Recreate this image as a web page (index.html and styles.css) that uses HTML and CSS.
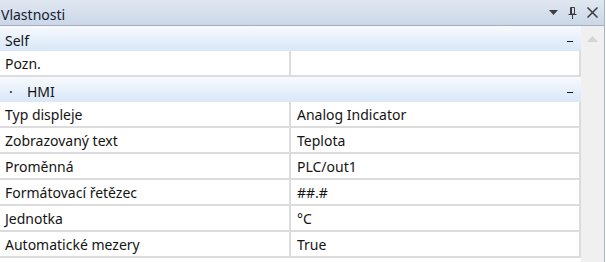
FILE: index.html
```html
<!DOCTYPE html>
<html lang="cs">
<head>
    <meta charset="UTF-8">
    <title>Vlastnosti</title>
    <link rel="stylesheet" href="styles.css">
</head>
<body>
    <div class="panel">
        <div class="titlebar">
            <span class="title">Vlastnosti</span>
            <div class="tools">
                <svg width="9" height="5" viewBox="0 0 9 5"><path d="M0 0H9L4.5 5Z" fill="#3c3c3c"/></svg>
                <svg width="9" height="12" viewBox="0 0 9 12"><path d="M2.5 0.5H6.5V7H2.5Z M3.5 0.5V7 M0.5 7.5H8.5 M4.5 7.5V12" fill="none" stroke="#3c3c3c" stroke-width="1"/></svg>
                <svg width="11" height="11" viewBox="0 0 11 11"><path d="M0.5 0.5L10.5 10.5M10.5 0.5L0.5 10.5" stroke="#3c3c3c" stroke-width="1.5"/></svg>
            </div>
        </div>
        <div class="content">
            <div class="grid">
                <div class="category"><span class="label">Self</span><i class="collapse"></i></div>
                <div class="row"><div class="name">Pozn.</div><div class="value"></div></div>
                <div class="category"><span class="label"><b class="dot">·</b>HMI</span><i class="collapse"></i></div>
                <div class="row"><div class="name">Typ displeje</div><div class="value">Analog Indicator</div></div>
                <div class="row"><div class="name">Zobrazovaný text</div><div class="value">Teplota</div></div>
                <div class="row"><div class="name">Proměnná</div><div class="value">PLC/out1</div></div>
                <div class="row"><div class="name">Formátovací řetězec</div><div class="value">##.#</div></div>
                <div class="row"><div class="name">Jednotka</div><div class="value">°C</div></div>
                <div class="row"><div class="name">Automatické mezery</div><div class="value">True</div></div>
            </div>
            <div class="scrollbar">
                <svg width="11" height="6" viewBox="0 0 11 6"><path d="M0 6H11L5.5 0Z" fill="#d4d4d4"/></svg>
            </div>
        </div>
    </div>
</body>
</html>
```

FILE: styles.css
```css
body {
    margin: 0;
    background: #ffffff;
    font-family: "Noto Sans", "Open Sans", sans-serif;
    font-size: 14px;
    color: #141414;
}

.panel {
    width: 604px;
    height: 262px;
    border-right: 1px solid #a9b5c6;
    display: flex;
    flex-direction: column;
}

.titlebar {
    height: 25px;
    border-bottom: 1px solid #a3adbd;
    background: linear-gradient(#e0e7f1, #cbd7e7);
    display: flex;
    align-items: center;
    justify-content: space-between;
    padding: 0 6px 0 1px;
}

.title {
    color: #15202e;
    padding-top: 3px;
}

.tools {
    display: flex;
    align-items: center;
    gap: 10px;
}

.content {
    flex: 1;
    display: flex;
    background: #f0f0f0;
}

.grid {
    width: 581px;
    background: #fff;
    display: flex;
    flex-direction: column;
}

.category {
    height: 25px;
    background: linear-gradient(#f7fafe, #d9e7f8);
    display: flex;
    align-items: center;
    justify-content: space-between;
    padding: 0 8px 0 5px;
}

.label {
    padding-top: 3px;
}

.dot {
    font-weight: normal;
    display: inline-block;
    width: 18px;
    padding-left: 4px;
}

.collapse {
    width: 6px;
    height: 1px;
    background: #1a1a1a;
    margin-top: 5px;
}

.row {
    height: 24px;
    display: flex;
    border-bottom: 2px solid #dcdcdc;
    border-right: 2px solid #dcdcdc;
}

.name {
    width: 284px;
    padding: 2px 0 0 5px;
    border-right: 2px solid #dcdcdc;
    line-height: 22px;
}

.value {
    flex: 1;
    padding: 2px 0 0 6px;
    line-height: 22px;
}

.scrollbar {
    flex: 1;
    display: flex;
    justify-content: center;
    padding-top: 10px;
}
```
